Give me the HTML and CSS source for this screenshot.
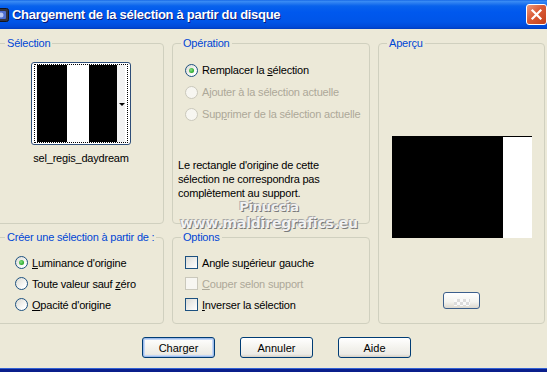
FILE: index.html
```html
<!DOCTYPE html>
<html lang="fr">
<head>
    <meta charset="UTF-8">
    <meta name="viewport" content="width=device-width, initial-scale=1.0">
    <title>Chargement de la sélection à partir du disque</title>
    <link rel="stylesheet" href="styles.css">
</head>
<body>
    <div class="window">
        <div class="titlebar">
            <svg class="app-icon" viewBox="0 0 16 16">
                <rect x="0.5" y="1.5" width="15" height="13" rx="2" fill="#34343f" stroke="#15151c"/>
                <rect x="3" y="4" width="10" height="8" rx="1" fill="#4f6fd0"/>
                <circle cx="8" cy="8" r="2.5" fill="#b9c8f2"/>
            </svg>
            <span class="title">Chargement de la sélection à partir du disque</span>
            <div class="close">
                <svg viewBox="0 0 19 19" width="19" height="19">
                    <path d="M5.5 5.5 L13.5 13.5 M13.5 5.5 L5.5 13.5" stroke="#fff" stroke-width="2.2" stroke-linecap="square"/>
                </svg>
            </div>
        </div>

        <div class="client">
            <div class="groups">
                <fieldset class="sel">
                    <legend>Sélection</legend>
                    <div class="thumb-wrap">
                        <div class="thumb">
                            <div class="focus">
                                <div class="stripes">
                                    <span class="black s1"></span>
                                    <span class="white s2"></span>
                                    <span class="black s3"></span>
                                    <span class="light"><i class="arrow"></i></span>
                                </div>
                            </div>
                        </div>
                        <div class="thumb-name">sel_regis_daydream</div>
                    </div>
                </fieldset>

                <fieldset class="op">
                    <legend>Opération</legend>
                    <div class="opts">
                        <div class="opt"><span class="radio on"></span><span>Remplacer la <u>s</u>élection</span></div>
                        <div class="opt off"><span class="radio"></span><span>Ajouter à la sélection actuelle</span></div>
                        <div class="opt off"><span class="radio"></span><span>Sup<u>p</u>rimer de la sélection actuelle</span></div>
                    </div>
                    <p class="note">Le rectangle d'origine de cette<br>sélection ne correspondra pas<br>complètement au support.</p>
                </fieldset>

                <fieldset class="preview">
                    <legend>Aperçu</legend>
                    <div class="pv"><span class="pv-white"></span></div>
                    <div class="pv-btn"><span class="checker"></span></div>
                </fieldset>

                <fieldset class="create">
                    <legend>Créer une sélection à partir de :</legend>
                    <div class="opts">
                        <div class="opt"><span class="radio on"></span><span><u>L</u>uminance d'origine</span></div>
                        <div class="opt"><span class="radio"></span><span>Toute valeur sauf <u>z</u>éro</span></div>
                        <div class="opt"><span class="radio"></span><span><u>O</u>pacité d'origine</span></div>
                    </div>
                </fieldset>

                <fieldset class="options">
                    <legend>Options</legend>
                    <div class="opts">
                        <div class="opt"><span class="check"></span><span>Angle su<u>p</u>érieur gauche</span></div>
                        <div class="opt off"><span class="check"></span><span><u>C</u>ouper selon support</span></div>
                        <div class="opt"><span class="check"></span><span><u>I</u>nverser la sélection</span></div>
                    </div>
                </fieldset>

                <div class="watermark">
                    <div class="wm1">Pinuccia</div>
                    <div class="wm2">www.maldiregrafics.eu</div>
                </div>
            </div>

            <div class="actions">
                <button class="btn default">Charger</button>
                <button class="btn">Annuler</button>
                <button class="btn">Aide</button>
            </div>
        </div>
    </div>
</body>
</html>
```

FILE: styles.css
```css
* {
    box-sizing: border-box;
}
body {
    margin: 0;
    font-family: "Liberation Sans", Arial, sans-serif;
    font-size: 11px;
    letter-spacing: -0.2px;
    color: #000;
    background: #ECE9D8;
}
.window {
    width: 547px;
    height: 372px;
    display: flex;
    flex-direction: column;
    background: #ECE9D8;
    border-bottom: 3px solid #0A1F8C;
    overflow: hidden;
}

/* title bar */
.titlebar {
    height: 29px;
    flex: none;
    display: flex;
    align-items: center;
    background: linear-gradient(#0A5BE0 0, #3C8EF5 1px, #2A7DF0 3px, #0862EC 6px, #0058EE 12px, #0055E8 22px, #0049D8 27px, #003DBE 29px);
}
.app-icon {
    width: 16px;
    height: 16px;
    margin-left: -7px;
    flex: none;
}
.title {
    flex: 1;
    margin-left: 3px;
    color: #fff;
    font-weight: bold;
    font-size: 13px;
    letter-spacing: -0.3px;
    text-shadow: 1px 1px 0 #0A1A7A;
}
.close {
    width: 21px;
    height: 21px;
    flex: none;
    border: 1px solid #fff;
    border-radius: 3px;
    background: linear-gradient(135deg, #EC9A7E, #DA5B36 45%, #C4401A);
    display: flex;
}

/* client area */
.client {
    flex: 1;
    padding-top: 7px;
    border-bottom: 1px solid #3362D4;
}
.groups {
    position: relative;
    display: grid;
    grid-template-columns: 168px 198px 167px;
    grid-template-rows: 188px 94px;
    column-gap: 8px;
    row-gap: 6px;
    margin-left: -4px;
}
fieldset {
    margin: 0;
    padding: 0;
    min-width: 0;
    border: 1px solid #D0D0BF;
    border-radius: 4px;
}
legend {
    margin-left: 8px;
    padding: 0 2px;
    line-height: 14px;
    color: #0046D5;
}
.sel {
    grid-column: 1;
    grid-row: 1;
    padding-top: 12px;
}
.op {
    grid-column: 2;
    grid-row: 1;
    padding-top: 9px;
}
.preview {
    grid-column: 3;
    grid-row: 1 / 3;
}
.create {
    grid-column: 1;
    grid-row: 2;
    padding-top: 8px;
}
.options {
    grid-column: 2;
    grid-row: 2;
    padding-top: 8px;
}

/* thumbnail */
.thumb-wrap {
    display: inline-flex;
    flex-direction: column;
    align-items: center;
    margin-left: 34px;
}
.thumb {
    width: 100px;
    border: 1px solid #2E4E78;
    border-radius: 3px;
    padding: 1px 2px;
    background: #fff;
}
.focus {
    border: 1px dotted #000;
    padding: 0 2px;
}
.stripes {
    display: flex;
    height: 77px;
}
.black {
    background: #000;
}
.white {
    background: #fff;
}
.s1 {
    width: 30px;
}
.s2 {
    width: 22px;
}
.s3 {
    width: 28px;
}
.light {
    flex: 1;
    background: #F3F3F3;
    display: flex;
    align-items: center;
    justify-content: flex-end;
}
.arrow {
    width: 0;
    height: 0;
    border-left: 3px solid transparent;
    border-right: 3px solid transparent;
    border-top: 3px solid #000;
    margin-top: 2px;
}
.thumb-name {
    margin-top: 7px;
    line-height: 13px;
    white-space: nowrap;
}

/* radios and checks */
.opts {
    padding-left: 12px;
}
.create .opts {
    padding-left: 18px;
}
.op .opt {
    height: 22px;
}
.opt {
    display: flex;
    align-items: center;
    gap: 4px;
    height: 21px;
    white-space: nowrap;
}
.opt.off {
    color: #ACA899;
}
.radio {
    width: 13px;
    height: 13px;
    flex: none;
    border-radius: 50%;
    border: 1px solid #1C5180;
    background: linear-gradient(135deg, #DCDBD3, #FFFFFF 80%);
    display: flex;
    align-items: center;
    justify-content: center;
}
.radio.on::after {
    content: "";
    width: 5px;
    height: 5px;
    border-radius: 50%;
    background: radial-gradient(circle at 40% 40%, #86E286, #21A121 75%);
}
.off .radio,
.off .check {
    border-color: #CAC8BB;
    background: #F7F6F1;
}
.check {
    width: 13px;
    height: 13px;
    flex: none;
    border: 1px solid #1C5180;
    background: linear-gradient(135deg, #DCDCD7, #FFFFFF);
}
.note {
    margin: 33px 0 0 5px;
    line-height: 14px;
}

/* preview */
.pv {
    width: 140px;
    height: 102px;
    margin: 86px auto 0;
    padding-top: 1px;
    background: #000;
    display: flex;
    justify-content: flex-end;
}
.pv-white {
    width: 29px;
    background: #fff;
}
.pv-btn {
    width: 37px;
    height: 17px;
    margin: 54px auto 0;
    border: 1px solid #3B5F8C;
    border-radius: 3px;
    background: linear-gradient(#FFFFFF, #F3F3EE 60%, #DCD8CE);
    display: flex;
    justify-content: center;
    align-items: flex-end;
    padding-bottom: 2px;
}
.checker {
    width: 16px;
    height: 7px;
    background: repeating-conic-gradient(#DCDCDC 0 25%, #FAFAFA 0 50%) 0 0 / 6px 6px;
}

/* watermark over the boxes */
.watermark {
    position: absolute;
    left: 180px;
    top: 165px;
    width: 186px;
    text-align: center;
    font-family: "DejaVu Sans", sans-serif;
    font-weight: bold;
    color: #F2F2F2;
    text-shadow: 1px 1px 0 #7A7A7A, -1px -1px 0 #A8A8A8;
    pointer-events: none;
}
.wm1 {
    font-size: 13px;
    line-height: 11px;
}
.wm2 {
    font-size: 14px;
    line-height: 22px;
    letter-spacing: -0.2px;
}

/* buttons */
.actions {
    display: flex;
    gap: 25px;
    margin: 13px 0 0 142px;
}
.btn {
    width: 73px;
    height: 21px;
    padding: 0;
    font: inherit;
    color: #000;
    border: 1px solid #003C74;
    border-radius: 3px;
    background: linear-gradient(#FFFFFF, #F4F3EE 50%, #ECEBE6 85%, #D6D0C5);
}
.btn.default {
    box-shadow: inset 0 0 0 1px #9DBBEA, inset 0 0 0 2px #C5D8F6;
}
```
